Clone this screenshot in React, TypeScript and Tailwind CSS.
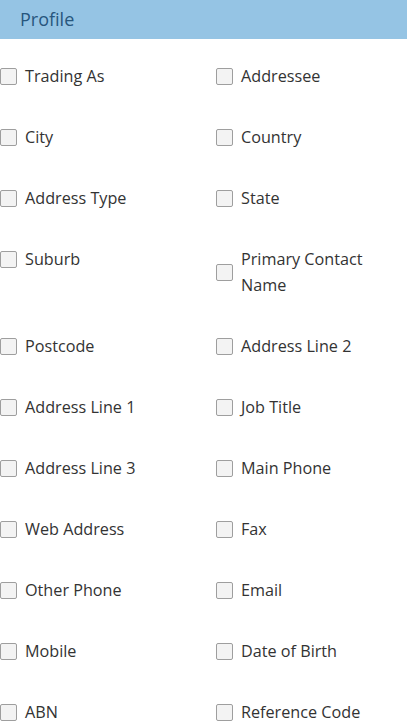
const fields: [string, string][] = [
  ['Trading As', 'Addressee'],
  ['City', 'Country'],
  ['Address Type', 'State'],
  ['Suburb', 'Primary Contact Name'],
  ['Postcode', 'Address Line 2'],
  ['Address Line 1', 'Job Title'],
  ['Address Line 3', 'Main Phone'],
  ['Web Address', 'Fax'],
  ['Other Phone', 'Email'],
  ['Mobile', 'Date of Birth'],
  ['ABN', 'Reference Code'],
]

function Field({ label }: { label: string }) {
  return (
    <label className="flex items-center self-start">
      <span className="w-[17px] h-[17px] shrink-0 border border-[#9e9e9e] bg-[#f3f3f3] rounded-[2px]" />
      <span className="ml-2 text-[16.2px] leading-[26px] text-[#333] pr-8">{label}</span>
    </label>
  )
}

export default function App() {
  return (
    <div className="w-[407px] bg-white font-['Open_Sans',sans-serif]">
      {/* Header */}
      <div className="h-[39px] bg-[#95c4e4] flex items-center pl-5">
        <h2 className="text-[18px] text-[#27567d]">Profile</h2>
      </div>

      {/* Fields */}
      <div className="grid grid-cols-[216px_1fr] gap-y-[35px] pt-[24px]">
        {fields.map(([left, right]) => (
          <div key={left} className="contents">
            <Field label={left} />
            <div className="flex items-center">
              <Field label={right} />
            </div>
          </div>
        ))}
      </div>
    </div>
  )
}
